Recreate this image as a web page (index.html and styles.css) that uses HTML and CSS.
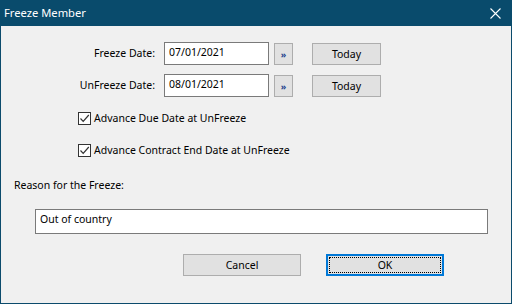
FILE: index.html
```html
<!DOCTYPE html>
<html>
	<head>
		<link rel="stylesheet" href="styles.css">
	</head>
	<body>
		<div id="window">
			<div class="titlebar">
				<span class="title">Freeze Member</span>
				<svg class="close" width="11" height="11" viewBox="0 0 11 11">
					<path d="M0.5 0.5 L10.5 10.5 M10.5 0.5 L0.5 10.5" stroke="#ffffff" stroke-width="1.1" fill="none"/>
				</svg>
			</div>
			<div class="content">
				<div class="daterow">
					<span class="lbl">Freeze Date:</span>
					<div class="field">07/01/2021</div>
					<button class="buton more">&raquo;</button>
					<button class="buton today">Today</button>
				</div>
				<div class="daterow second">
					<span class="lbl">UnFreeze Date:</span>
					<div class="field">08/01/2021</div>
					<button class="buton more">&raquo;</button>
					<button class="buton today">Today</button>
				</div>
				<div class="check first">
					<span class="box">
						<svg width="11" height="11" viewBox="0 0 11 11">
							<path d="M1.5 5.5 L4.2 8.3 L9.8 2" stroke="#333333" stroke-width="1.2" fill="none"/>
						</svg>
					</span>
					<span>Advance Due Date at UnFreeze</span>
				</div>
				<div class="check">
					<span class="box">
						<svg width="11" height="11" viewBox="0 0 11 11">
							<path d="M1.5 5.5 L4.2 8.3 L9.8 2" stroke="#333333" stroke-width="1.2" fill="none"/>
						</svg>
					</span>
					<span>Advance Contract End Date at UnFreeze</span>
				</div>
				<div class="reason">Reason for the Freeze:</div>
				<div class="field wide">Out of country</div>
				<div class="actions">
					<button class="buton action">Cancel</button>
					<button class="buton action ok"><span class="focus">OK</span></button>
				</div>
			</div>
		</div>
	</body>
</html>
```
FILE: styles.css
```css
body {
	margin: 0;
	font-family: "Noto Sans", "Liberation Sans", sans-serif;
	font-size: 10.5px;
	color: #000000;
}
#window {
	width: 512px;
	height: 304px;
	box-sizing: border-box;
	border: 1px solid #0b4b6c;
	border-top: none;
	background-color: #f0f0f0;
}
.titlebar {
	height: 26px;
	margin: 0 -1px;
	background-color: #094b6c;
	color: #ffffff;
	display: flex;
	align-items: center;
	justify-content: space-between;
	padding: 0 11px 0 4px;
}
.title {
	font-size: 11.2px;
	padding-bottom: 1px;
}
.close {
	display: block;
}
.content {
	padding-top: 16px;
}
.daterow {
	display: flex;
	align-items: center;
	height: 23px;
}
.daterow.second {
	margin-top: 9px;
}
.lbl {
	width: 154px;
	text-align: right;
	margin-right: 9px;
	padding-bottom: 2px;
}
.field {
	box-sizing: border-box;
	width: 105px;
	height: 23px;
	background-color: #ffffff;
	border: 1px solid #7a7a7a;
	padding-left: 4px;
	line-height: 18px;
}
.buton {
	box-sizing: border-box;
	background-color: #e1e1e1;
	border: 1px solid #adadad;
	font-family: "Noto Sans", "Liberation Sans", sans-serif;
	font-size: 10.5px;
	color: #000000;
	padding: 0;
	height: 22px;
	margin-top: 1px;
}
.more {
	width: 19px;
	margin-left: 5px;
	color: #1c3f8c;
	font-size: 9px;
	font-weight: bold;
	line-height: 18px;
	padding-top: 2px;
}
.today {
	width: 69px;
	margin-left: 19px;
}
.check {
	display: flex;
	align-items: center;
	height: 20px;
	margin-top: 12px;
	padding-left: 77px;
}
.check.first {
	margin-top: 11px;
}
.box {
	box-sizing: border-box;
	width: 13px;
	height: 13px;
	border: 1px solid #333333;
	background-color: #ffffff;
	margin-right: 3px;
	display: flex;
}
.reason {
	margin-top: 18px;
	padding-left: 13px;
	height: 16px;
	line-height: 14px;
}
.field.wide {
	width: 453px;
	height: 25px;
	margin: 15px 0 0 34px;
	line-height: 19px;
}
.actions {
	display: flex;
	margin-top: 20px;
	padding-left: 182px;
}
.action {
	width: 118px;
	margin-top: 0;
}
.ok {
	margin-left: 25px;
	border: 2px solid #0078d7;
	padding: 1px;
}
.focus {
	display: block;
	height: 100%;
	box-sizing: border-box;
	border: 1px dotted #000000;
	line-height: 14px;
}
```
